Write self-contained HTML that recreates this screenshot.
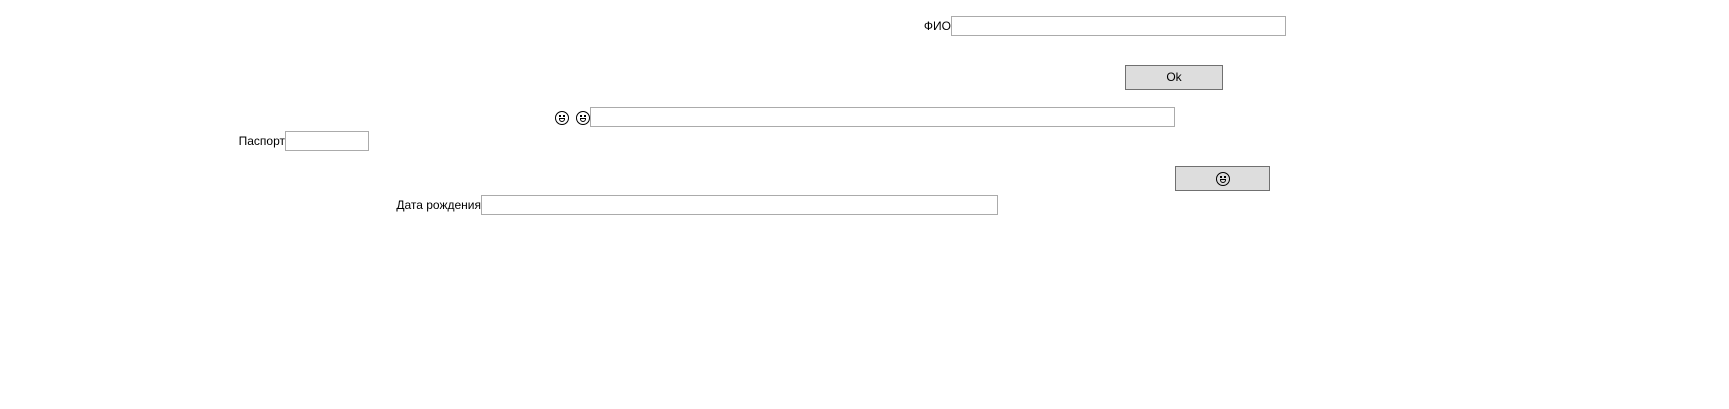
<!DOCTYPE html>
<html><head><meta charset="utf-8"><style>
body{margin:0;width:1729px;height:409px;background:#fff;position:relative;overflow:hidden;font-family:"Liberation Sans","DejaVu Sans",sans-serif;font-size:12px;color:#000}
.i{position:absolute;box-sizing:border-box;border:1px solid #ababab;background:#fff;height:20px}
.b{position:absolute;box-sizing:border-box;border:1px solid #707070;background:#dddddd;height:25px;text-align:center;line-height:23px;font-size:12px}
.l{position:absolute;text-align:right;line-height:21px;white-space:nowrap}
.e{display:inline-block;width:14px;height:14px;border:1px solid #000;border-radius:50%;box-sizing:border-box;vertical-align:middle;position:relative}
.e::before{content:"";position:absolute;left:3px;top:3px;width:6px;height:2px;border-left:2px solid #000;border-right:2px solid #000;box-sizing:border-box}
.e::after{content:"";position:absolute;left:3px;right:3px;bottom:2px;height:4px;border:1px solid #000;border-radius:0 0 4px 4px;box-sizing:border-box}
</style></head><body>
<div class="l" style="right:778px;top:16px">ФИО</div>
<div class="i" style="left:951px;top:16px;width:335px"></div>
<div class="b" style="left:1125px;top:65px;width:98px">Ok</div>
<div class="l" style="left:555px;top:107px"><span class="e"></span>&nbsp;&nbsp;<span class="e"></span></div>
<div class="i" style="left:590px;top:107px;width:585px"></div>
<div class="l" style="right:1444px;top:131px">Паспорт</div>
<div class="i" style="left:285px;top:131px;width:84px"></div>
<div class="b" style="left:1175px;top:166px;width:95px"><span class="e"></span></div>
<div class="l" style="right:1248px;top:195px">Дата рождения</div>
<div class="i" style="left:481px;top:195px;width:517px"></div>
</body></html>
